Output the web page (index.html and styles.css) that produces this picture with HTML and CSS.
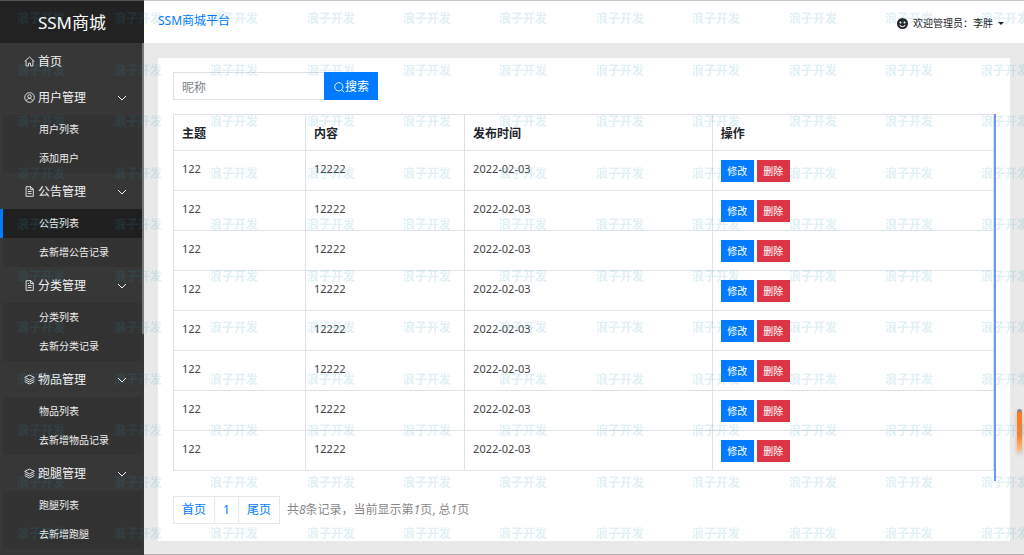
FILE: index.html
```html
<!DOCTYPE html>
<html lang="zh-CN">
<head>
<meta charset="utf-8">
<title>SSM商城平台</title>
<link rel="stylesheet" href="styles.css">
</head>
<body>
<svg class="sprite" aria-hidden="true">
  <symbol id="i-home" viewBox="0 0 16 16"><path d="M1 8 8 1.500 15 8M3 6.500V14.500h3.500v-4h3v4H13V6.500"/></symbol>
  <symbol id="i-user" viewBox="0 0 16 16"><circle cx="8" cy="8" r="7"/><circle cx="8" cy="6.500" r="2.500"/><path d="M4 12.500c.5-4.500 7.500-4.500 8 0"/></symbol>
  <symbol id="i-doc" viewBox="0 0 16 16"><path d="M3 1h7l3.500 3.500V15H3zM9.500 1v4h4M5.500 8H11M5.500 11H11M5.500 5h2"/></symbol>
  <symbol id="i-layers" viewBox="0 0 16 16"><path d="M8 1.500 15 5 8 8.500 1 5zM1 8l7 3.500L15 8M1 11l7 3.500L15 11"/></symbol>
  <symbol id="i-down" viewBox="0 0 10 10"><path d="M1 3l4 4 4-4"/></symbol>
  <symbol id="i-search" viewBox="0 0 16 16"><circle cx="7" cy="7" r="6"/><path d="M11 11l4 4"/></symbol>
</svg>
<div class="app">
  <aside class="side">
    <div class="brand">SSM商城</div>
    <nav class="nav">
      <a class="item" href="#"><svg class="icon"><use href="#i-home"/></svg>首页</a>

      <button class="item" type="button"><svg class="icon"><use href="#i-user"/></svg>用户管理<svg class="chev"><use href="#i-down"/></svg></button>
      <div class="sub"><a href="#">用户列表</a><a href="#">添加用户</a></div>

      <button class="item" type="button"><svg class="icon"><use href="#i-doc"/></svg>公告管理<svg class="chev"><use href="#i-down"/></svg></button>
      <div class="sub"><a class="active" href="#">公告列表</a><a href="#">去新增公告记录</a></div>

      <button class="item" type="button"><svg class="icon"><use href="#i-doc"/></svg>分类管理<svg class="chev"><use href="#i-down"/></svg></button>
      <div class="sub"><a href="#">分类列表</a><a href="#">去新分类记录</a></div>

      <button class="item" type="button"><svg class="icon"><use href="#i-layers"/></svg>物品管理<svg class="chev"><use href="#i-down"/></svg></button>
      <div class="sub"><a href="#">物品列表</a><a href="#">去新增物品记录</a></div>

      <button class="item" type="button"><svg class="icon"><use href="#i-layers"/></svg>跑腿管理<svg class="chev"><use href="#i-down"/></svg></button>
      <div class="sub"><a href="#">跑腿列表</a><a href="#">去新增跑腿</a></div>
      <span class="thumb"></span>
    </nav>
  </aside>

  <div class="main">
    <header class="top">
      <a class="title" href="#">SSM商城平台</a>
      <button class="account" type="button">
        <svg class="face" viewBox="0 0 16 16"><circle cx="8" cy="8" r="8" fill="#212529"/><circle cx="5" cy="6.500" r="1.500" fill="#fff"/><circle cx="11" cy="6.500" r="1.500" fill="#fff"/><path d="M4 10c1.500 3.500 6.500 3.500 8 0" fill="none" stroke="#fff" stroke-width="1.500"/></svg>
        <span>欢迎管理员：李胖</span>
        <span class="caret"></span>
      </button>
    </header>

    <main class="card">
      <form class="search">
        <input type="text" placeholder="昵称" aria-label="昵称">
        <button type="button"><svg class="icon"><use href="#i-search"/></svg>搜索</button>
      </form>

      <div class="table-wrap">
        <table>
          <colgroup><col class="c1"><col class="c2"><col class="c3"><col class="c4"></colgroup>
          <thead><tr><th>主题</th><th>内容</th><th>发布时间</th><th>操作</th></tr></thead>
          <tbody>
            <tr><td>122</td><td>12222</td><td>2022-02-03</td><td><div class="ops"><button class="edit" type="button">修改</button><button class="del" type="button">删除</button></div></td></tr>
            <tr><td>122</td><td>12222</td><td>2022-02-03</td><td><div class="ops"><button class="edit" type="button">修改</button><button class="del" type="button">删除</button></div></td></tr>
            <tr><td>122</td><td>12222</td><td>2022-02-03</td><td><div class="ops"><button class="edit" type="button">修改</button><button class="del" type="button">删除</button></div></td></tr>
            <tr><td>122</td><td>12222</td><td>2022-02-03</td><td><div class="ops"><button class="edit" type="button">修改</button><button class="del" type="button">删除</button></div></td></tr>
            <tr><td>122</td><td>12222</td><td>2022-02-03</td><td><div class="ops"><button class="edit" type="button">修改</button><button class="del" type="button">删除</button></div></td></tr>
            <tr><td>122</td><td>12222</td><td>2022-02-03</td><td><div class="ops"><button class="edit" type="button">修改</button><button class="del" type="button">删除</button></div></td></tr>
            <tr><td>122</td><td>12222</td><td>2022-02-03</td><td><div class="ops"><button class="edit" type="button">修改</button><button class="del" type="button">删除</button></div></td></tr>
            <tr><td>122</td><td>12222</td><td>2022-02-03</td><td><div class="ops"><button class="edit" type="button">修改</button><button class="del" type="button">删除</button></div></td></tr>
          </tbody>
        </table>
      </div>

      <div class="pager">
        <div class="pages"><a href="#">首页</a><a href="#">1</a><a href="#">尾页</a></div>
        <p>共<i>8</i>条记录，当前显示第<i>1</i>页, 总<i>1</i>页</p>
      </div>
    </main>
  </div>
</div>
<span class="marker"></span>
<svg class="watermark" aria-hidden="true">
  <pattern id="wm" width="482" height="103" patternUnits="userSpaceOnUse">
    <text x="17" y="23">浪子开发</text><text x="114" y="23">浪子开发</text><text x="210" y="23">浪子开发</text><text x="307" y="23">浪子开发</text><text x="403" y="23">浪子开发</text>
    <text x="17" y="75">浪子开发</text><text x="114" y="75">浪子开发</text><text x="210" y="75">浪子开发</text><text x="307" y="75">浪子开发</text><text x="403" y="75">浪子开发</text>
  </pattern>
  <rect width="100%" height="100%" fill="url(#wm)"/>
</svg>
</body>
</html>
```
FILE: styles.css
```css
* { box-sizing: border-box; }
body {
  margin: 0;
  font: 12px/18px "Noto Sans", "Noto Sans CJK SC", sans-serif;
  color: #212529;
  background: #e9e9e9;
  overflow: hidden;
}
a { text-decoration: none; color: #007bff; }
button, input { font: inherit; margin: 0; border: 0; border-radius: 0; }
.sprite { position: absolute; width: 0; height: 0; }
.icon, .chev { fill: none; stroke: currentColor; }
.icon { width: 11px; height: 11px; stroke-width: 1.3; flex: none; }
.chev { width: 10px; height: 10px; margin-left: auto; }

.app { display: flex; height: 100vh; }

.side {
  flex: 0 0 144px;
  display: flex;
  flex-direction: column;
  overflow: hidden;
  background: #373737;
  border-top: 1px solid #555;
}
.brand {
  flex: none;
  height: 42px;
  background: #222;
  color: #fff;
  font-size: 17px;
  line-height: 44px;
  text-align: center;
}
.nav { position: relative; flex: 1; overflow: hidden; }
.item {
  display: flex;
  align-items: center;
  gap: 3px;
  width: 100%;
  height: 36px;
  padding: 1px 17px 0 24px;
  background: none;
  color: #f2f2f2;
  text-align: left;
}
.sub { margin-right: 2px; border-left: 3px solid #373737; background: #323232; }
.sub a {
  display: block;
  height: 29px;
  padding-left: 36px;
  color: #eee;
  font-size: 10px;
  line-height: 29px;
}
.sub .active { margin-left: -3px; padding-left: 36px; border-left: 3px solid #007bff; background: #1f1f1f; }
.thumb { position: absolute; top: 0; right: 0; width: 2px; height: 291px; background: #777; }

.main {
  flex: 1;
  min-width: 0;
  border-top: 1px solid #c8c8c8;
  border-bottom: 1px solid #b5b0b2;
}
.top {
  display: flex;
  justify-content: space-between;
  align-items: center;
  height: 42px;
  padding: 2px 20px 0 14px;
  background: #fff;
}
.title { padding-bottom: 4px; }
.account {
  display: flex;
  align-items: center;
  gap: 5px;
  padding: 0;
  background: none;
  color: #212529;
  font-size: 10px;
}
.face { width: 11px; height: 11px; }
.caret { border: 3px solid transparent; border-top-color: #212529; border-bottom: 0; }

.card { margin: 15px 14px 0; padding: 14px 15px 17px; background: #fff; }
.search { display: flex; }
.search input {
  width: 151px;
  height: 28px;
  padding: 2px 8px 0;
  border: 1px solid #dee2e6;
  border-right: 0;
  background: #fff;
}
.search input::placeholder { color: #7b838a; }
.search button {
  display: flex;
  align-items: center;
  height: 28px;
  padding: 2px 9px 0 10px;
  background: #007bff;
  color: #fff;
}

.table-wrap { margin: 14px -1px 0 0; padding-bottom: 10px; border-right: 2px solid #6b98ff; }
table { width: 100%; table-layout: fixed; border-collapse: collapse; }
.c1 { width: 16.1%; }
.c2 { width: 19.4%; }
.c3 { width: 30.2%; }
th, td { border: 1px solid #dee2e6; padding: 9px 8px 0; text-align: left; vertical-align: top; }
th { height: 36px; padding-top: 10px; }
td { height: 40px; font-size: 11px; color: #444; }
.ops { display: flex; gap: 3px; }
.ops button { width: 33px; height: 22px; padding: 0; color: #fff; font-size: 10px; }
.edit { background: #007bff; }
.del { background: #dc3545; }

.pager { display: flex; align-items: center; gap: 7px; margin-top: 15px; }
.pages { display: flex; border: 1px solid #e6e9ec; }
.pages a { padding: 4px 8px; }
.pages a + a { border-left: 1px solid #e6e9ec; }
.pager p { margin: 0; color: #888; }

.marker {
  position: absolute;
  top: 409px;
  right: 2px;
  width: 5px;
  height: 43px;
  border-radius: 3px;
  background: linear-gradient(#888 0, #888 2px, #ff7a1f 4px, #ff8430 65%, #ffc48f);
  box-shadow: 0 2px 4px #bbb;
}
.watermark {
  position: absolute;
  inset: 0;
  width: 100%;
  height: 100%;
  pointer-events: none;
}
.watermark text {
  fill: #2795b4;
  fill-opacity: 0.14;
  font-family: "Noto Sans CJK SC", sans-serif;
  font-size: 12px;
  font-weight: 700;
}
```
